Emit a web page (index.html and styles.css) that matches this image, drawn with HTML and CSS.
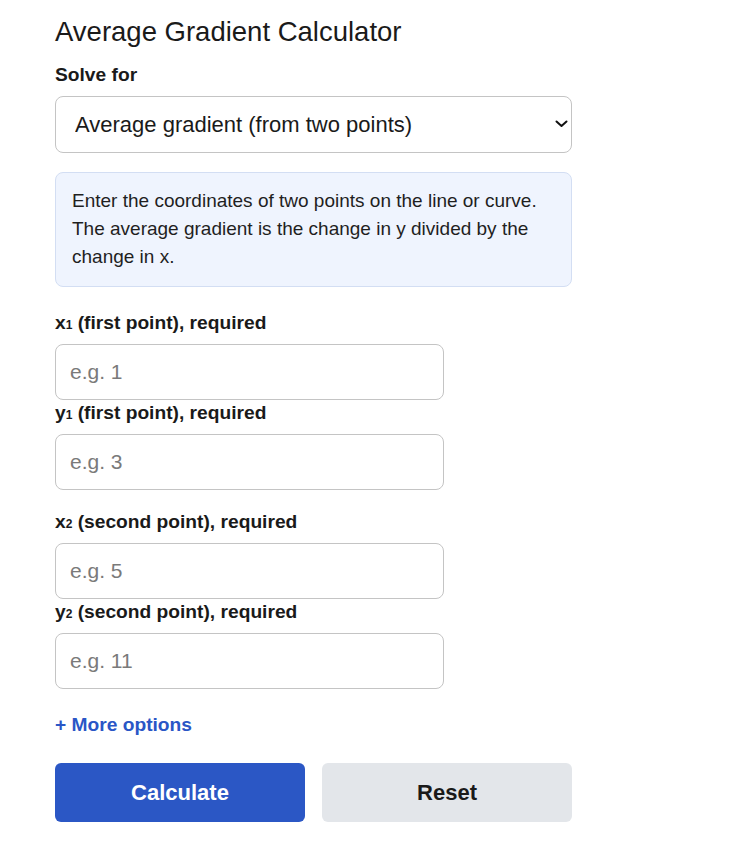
FILE: index.html
```html
<!DOCTYPE html>
<html>
<head>
<meta charset="utf-8">
<link rel="stylesheet" href="styles.css">
</head>
<body>
<main class="calc">
  <h1 class="title">Average Gradient Calculator</h1>
  <label class="field-label solve-label" for="solve">Solve for</label>
  <div class="select-wrap">
    <select id="solve" class="select">
      <option>Average gradient (from two points)</option>
    </select>
    <svg class="chev" width="13" height="8" viewBox="0 0 13 8"><path d="M1.5 1.5 L6.5 6 L11.5 1.5" fill="none" stroke="#111" stroke-width="2" stroke-linecap="round" stroke-linejoin="round"/></svg>
  </div>
  <div class="info">Enter the coordinates of two points on the line or curve. The average gradient is the change in y divided by the change in x.</div>

  <div class="group">
    <label class="field-label" for="x1">x<span class="sub">1</span> (first point), required</label>
    <input id="x1" class="input" placeholder="e.g. 1">
    <label class="field-label next" for="y1">y<span class="sub">1</span> (first point), required</label>
    <input id="y1" class="input" placeholder="e.g. 3">
  </div>
  <div class="group">
    <label class="field-label" for="x2">x<span class="sub">2</span> (second point), required</label>
    <input id="x2" class="input" placeholder="e.g. 5">
    <label class="field-label next" for="y2">y<span class="sub">2</span> (second point), required</label>
    <input id="y2" class="input" placeholder="e.g. 11">
  </div>

  <a class="more" href="#">+ More options</a>

  <div class="buttons">
    <button class="btn primary">Calculate</button>
    <button class="btn secondary">Reset</button>
  </div>
</main>
</body>
</html>
```
FILE: styles.css
```css
html, body {
  margin: 0;
  padding: 0;
  background: #ffffff;
}
body {
  font-family: "Liberation Sans", Arial, sans-serif;
  color: #1a1a1a;
}
.calc {
  width: 517px;
  margin-left: 55px;
  padding-top: 15px;
  display: flex;
  flex-direction: column;
}
.title {
  font-size: 27.5px;
  font-weight: normal;
  line-height: 34px;
  margin: 0 0 15px 0;
  color: #1a1a1a;
}
.field-label {
  display: block;
  font-size: 19.2px;
  font-weight: bold;
  line-height: 22px;
  color: #1a1a1a;
}
.solve-label {
  margin-bottom: 10px;
}
.sub {
  font-size: 12px;
  line-height: 0;
}
.select-wrap {
  position: relative;
  height: 57px;
}
.select {
  appearance: none;
  -webkit-appearance: none;
  width: 100%;
  height: 57px;
  box-sizing: border-box;
  border: 1px solid #c4c4c4;
  border-radius: 8px;
  background: #fff;
  font-family: "Liberation Sans", Arial, sans-serif;
  font-size: 22px;
  color: #1a1a1a;
  padding: 0 40px 0 19px;
}
.chev {
  position: absolute;
  right: 4px;
  top: 24px;
  pointer-events: none;
}
.info {
  margin-top: 19px;
  background: #eff4fe;
  border: 1px solid #d3def3;
  border-radius: 8px;
  padding: 14px 16px 15px 16px;
  font-size: 19px;
  line-height: 28px;
  color: #1f1f1f;
}
.group {
  display: flex;
  flex-direction: column;
  margin-top: 25px;
}
.group + .group {
  margin-top: 21px;
}
.group .field-label {
  margin-bottom: 10px;
}
.group .next {
  margin-top: 2px;
}
.input {
  width: 389px;
  height: 56px;
  box-sizing: border-box;
  border: 1px solid #c4c4c4;
  border-radius: 8px;
  padding: 0 14px;
  font-family: "Liberation Sans", Arial, sans-serif;
  font-size: 21px;
  color: #1a1a1a;
  background: #fff;
}
.input::placeholder {
  color: #7a7a7a;
}
.more {
  margin-top: 25px;
  font-size: 19.2px;
  font-weight: bold;
  line-height: 22px;
  color: #2a56c6;
  text-decoration: none;
}
.buttons {
  display: flex;
  gap: 17px;
  margin-top: 27px;
}
.btn {
  flex: 1;
  height: 59px;
  border: none;
  border-radius: 6px;
  font-family: "Liberation Sans", Arial, sans-serif;
  font-size: 22px;
  font-weight: bold;
}
.primary {
  background: #2b57c5;
  color: #ffffff;
}
.secondary {
  background: #e3e6ea;
  color: #1a1a1a;
}
```
